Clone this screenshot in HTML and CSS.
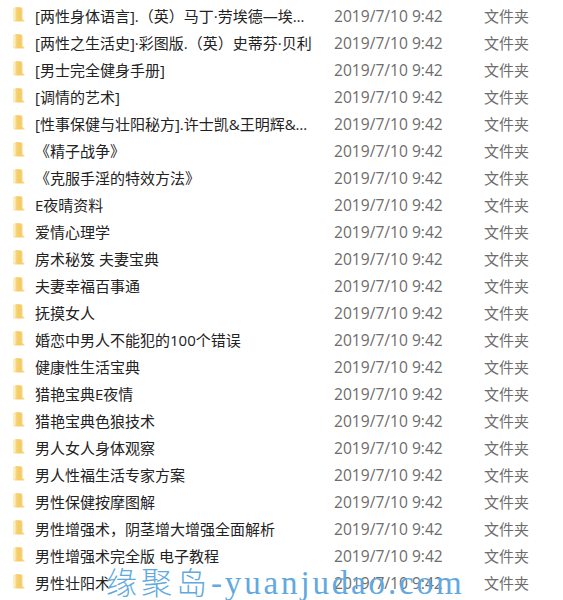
FILE: index.html
```html
<!DOCTYPE html>
<html lang="zh-CN">
<head>
<meta charset="utf-8">
<title>文件列表</title>
<link rel="stylesheet" href="styles.css">
</head>
<body>
<svg class="defs" width="0" height="0" aria-hidden="true">
  <defs>
    <linearGradient id="fold" x1="0" y1="0" x2="1" y2="0">
      <stop offset="0" stop-color="#f9e09a"/>
      <stop offset="0.55" stop-color="#f4ca62"/>
      <stop offset="1" stop-color="#f7da8a"/>
    </linearGradient>
    <symbol id="folder" viewBox="0 0 13 17">
      <path d="M1 2.5 L4 1 L10 1.5 L10.5 4 L10.5 13 L12.5 14.5 L12.5 15.5 L3 15.5 L1 14.5 Z" fill="url(#fold)"/>
      <path d="M1 2.5 L3.5 1.5 L3.5 14.5 L1 14.5 Z" fill="#fbeec2"/>
    </symbol>
  </defs>
</svg>
<main class="list">
  <div class="row"><svg class="icon"><use href="#folder"/></svg><span class="name">[两性身体语言].（英）马丁·劳埃德—埃…</span><span class="date">2019/7/10 9:42</span><span class="type">文件夹</span></div>
  <div class="row"><svg class="icon"><use href="#folder"/></svg><span class="name">[两性之生活史]·彩图版.（英）史蒂芬·贝利</span><span class="date">2019/7/10 9:42</span><span class="type">文件夹</span></div>
  <div class="row"><svg class="icon"><use href="#folder"/></svg><span class="name">[男士完全健身手册]</span><span class="date">2019/7/10 9:42</span><span class="type">文件夹</span></div>
  <div class="row"><svg class="icon"><use href="#folder"/></svg><span class="name">[调情的艺术]</span><span class="date">2019/7/10 9:42</span><span class="type">文件夹</span></div>
  <div class="row"><svg class="icon"><use href="#folder"/></svg><span class="name">[性事保健与壮阳秘方].许士凯&amp;王明辉&amp;…</span><span class="date">2019/7/10 9:42</span><span class="type">文件夹</span></div>
  <div class="row"><svg class="icon"><use href="#folder"/></svg><span class="name">《精子战争》</span><span class="date">2019/7/10 9:42</span><span class="type">文件夹</span></div>
  <div class="row"><svg class="icon"><use href="#folder"/></svg><span class="name">《克服手淫的特效方法》</span><span class="date">2019/7/10 9:42</span><span class="type">文件夹</span></div>
  <div class="row"><svg class="icon"><use href="#folder"/></svg><span class="name">E夜晴资料</span><span class="date">2019/7/10 9:42</span><span class="type">文件夹</span></div>
  <div class="row"><svg class="icon"><use href="#folder"/></svg><span class="name">爱情心理学</span><span class="date">2019/7/10 9:42</span><span class="type">文件夹</span></div>
  <div class="row"><svg class="icon"><use href="#folder"/></svg><span class="name">房术秘笈 夫妻宝典</span><span class="date">2019/7/10 9:42</span><span class="type">文件夹</span></div>
  <div class="row"><svg class="icon"><use href="#folder"/></svg><span class="name">夫妻幸福百事通</span><span class="date">2019/7/10 9:42</span><span class="type">文件夹</span></div>
  <div class="row"><svg class="icon"><use href="#folder"/></svg><span class="name">抚摸女人</span><span class="date">2019/7/10 9:42</span><span class="type">文件夹</span></div>
  <div class="row"><svg class="icon"><use href="#folder"/></svg><span class="name">婚恋中男人不能犯的100个错误</span><span class="date">2019/7/10 9:42</span><span class="type">文件夹</span></div>
  <div class="row"><svg class="icon"><use href="#folder"/></svg><span class="name">健康性生活宝典</span><span class="date">2019/7/10 9:42</span><span class="type">文件夹</span></div>
  <div class="row"><svg class="icon"><use href="#folder"/></svg><span class="name">猎艳宝典E夜情</span><span class="date">2019/7/10 9:42</span><span class="type">文件夹</span></div>
  <div class="row"><svg class="icon"><use href="#folder"/></svg><span class="name">猎艳宝典色狼技术</span><span class="date">2019/7/10 9:42</span><span class="type">文件夹</span></div>
  <div class="row"><svg class="icon"><use href="#folder"/></svg><span class="name">男人女人身体观察</span><span class="date">2019/7/10 9:42</span><span class="type">文件夹</span></div>
  <div class="row"><svg class="icon"><use href="#folder"/></svg><span class="name">男人性福生活专家方案</span><span class="date">2019/7/10 9:42</span><span class="type">文件夹</span></div>
  <div class="row"><svg class="icon"><use href="#folder"/></svg><span class="name">男性保健按摩图解</span><span class="date">2019/7/10 9:42</span><span class="type">文件夹</span></div>
  <div class="row"><svg class="icon"><use href="#folder"/></svg><span class="name">男性增强术，阴茎增大增强全面解析</span><span class="date">2019/7/10 9:42</span><span class="type">文件夹</span></div>
  <div class="row"><svg class="icon"><use href="#folder"/></svg><span class="name">男性增强术完全版 电子教程</span><span class="date">2019/7/10 9:42</span><span class="type">文件夹</span></div>
  <div class="row"><svg class="icon"><use href="#folder"/></svg><span class="name">男性壮阳术</span><span class="date">2019/7/10 9:42</span><span class="type">文件夹</span></div>
</main>
<div class="watermark"><span class="wm-cjk">缘聚岛</span><span class="wm-latin">-yuanjudao.com</span></div>
</body>
</html>
```

FILE: styles.css
```css
html, body {
  margin: 0;
  padding: 0;
  background: #ffffff;
}

body {
  width: 563px;
  height: 600px;
  overflow: hidden;
  position: relative;
  font-family: "Open Sans", "Noto Sans CJK SC", sans-serif;
}

.defs {
  display: block;
  height: 0;
}

.list {
  display: flex;
  flex-direction: column;
  padding-top: 2px;
}

.row {
  display: flex;
  align-items: center;
  height: 27px;
  padding-left: 12px;
  white-space: nowrap;
}

.icon {
  width: 13px;
  height: 17px;
  flex: none;
  margin-right: 10px;
  margin-top: -3px;
}

.name {
  width: 299px;
  flex: none;
  font-size: 15px;
  color: #222222;
}

.date {
  width: 150px;
  flex: none;
  font-family: "Open Sans", "Noto Sans", sans-serif;
  font-size: 15.6px;
  color: #6d6d6d;
}

.type {
  font-size: 15px;
  color: #6d6d6d;
}

.watermark {
  position: absolute;
  left: 106px;
  top: 561px;
  line-height: 40px;
  color: #62a9e0;
  white-space: nowrap;
}

.wm-cjk {
  font-family: "Noto Sans CJK SC", serif;
  font-weight: 300;
  font-size: 31px;
  letter-spacing: 4px;
}

.wm-latin {
  font-family: "Liberation Serif", serif;
  font-size: 33px;
  letter-spacing: 2.85px;
}
```
